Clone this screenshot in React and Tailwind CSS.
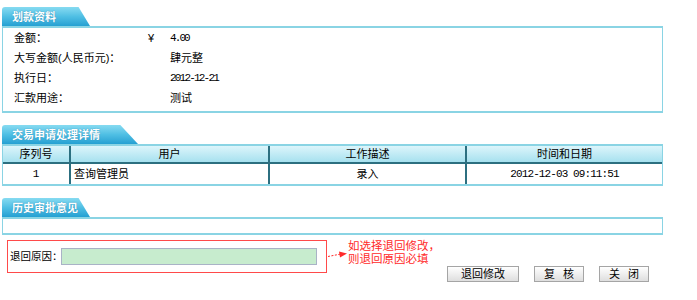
import React from "react";

const FONT = "font-['Liberation_Sans','Noto_Sans_CJK_SC',sans-serif]";
const MONO = "font-['Liberation_Mono',monospace]";

function Tab({ label, w }) {
  return (
    <div className={`h-[19px] ${w} rounded-tl-[3px] bg-linear-to-b from-[#86dbf1] via-[#4fbfe4] to-[#24a0d2] [clip-path:polygon(0_0,87%_0,100%_100%,0_100%)] pl-[10px] text-[11px] leading-[20px] font-bold text-white [text-shadow:0_0_1px_#1b7fa8]`}>
      {label}
    </div>
  );
}

function Row({ label, children }) {
  return (
    <div className="flex h-5 items-center">
      <div className="w-[156px] shrink-0">{label}</div>
      <div className="flex items-center">{children}</div>
    </div>
  );
}

const btn =
  "flex h-[16px] items-center justify-center border border-[#a5a5a5] bg-linear-to-b from-white to-[#dedede] text-[11px] leading-[14px] text-black";

export default function App() {
  return (
    <div className={`w-[697px] h-[300px] bg-white ${FONT} text-[11px] text-black pt-[7px] overflow-hidden`}>
      {/* Section 1 */}
      <div className="ml-[2px] w-[661px]">
        <Tab label="划款资料" w="w-[88px]" />
        <div className="border-x border-y-2 border-[#8ad4e4] pl-[11px] pb-[3px]">
          <div className="flex h-5 items-center">
            <div className="w-[134px] shrink-0">金额：</div>
            <div className="w-[22px] shrink-0 font-['Liberation_Sans',sans-serif]">¥</div>
            <div className={`${MONO} text-[11px] tracking-[-1.9px]`}>4.00</div>
          </div>
          <Row label="大写金额(人民币元)：">肆元整</Row>
          <Row label="执行日：">
            <span className={`${MONO} text-[11px] tracking-[-1.8px]`}>2012-12-21</span>
          </Row>
          <Row label="汇款用途：">测试</Row>
        </div>
      </div>

      {/* Section 2 */}
      <div className="ml-[2px] mt-[12px] w-[661px]">
        <Tab label="交易申请处理详情" w="w-[136px]" />
        <div className="border-x border-y-2 border-[#8ad4e4]">
          <div className="grid h-[18px] grid-cols-[66px_199px_197px_1fr] border-b-2 border-[#2c6f80] bg-linear-to-b from-[#dcf5fb] to-[#a6e1ef] leading-[16px]">
            <div className="text-center">序列号</div>
            <div className="border-l-2 border-[#2c6f80] text-center">用户</div>
            <div className="border-l-2 border-[#2c6f80] text-center">工作描述</div>
            <div className="border-l-2 border-[#2c6f80] text-center">时间和日期</div>
          </div>
          <div className="grid h-[20px] grid-cols-[66px_199px_197px_1fr] items-stretch leading-[20px]">
            <div className={`text-center ${MONO} text-[11px]`}>1</div>
            <div className="border-l-2 border-[#2c6f80] pl-[3px]">查询管理员</div>
            <div className="border-l-2 border-[#2c6f80] text-center">录入</div>
            <div className={`border-l-2 border-[#2c6f80] text-center ${MONO} text-[11px] tracking-[-0.9px]`}>2012-12-03 09:11:51</div>
          </div>
        </div>
      </div>

      {/* Section 3 */}
      <div className="ml-[2px] mt-[12px] w-[661px]">
        <Tab label="历史审批意见" w="w-[88px]" />
        <div className="h-[18px] border-x border-y-2 border-[#8ad4e4]"></div>
      </div>

      {/* Reason + actions */}
      <div className="mt-[5px] flex">
        <div className="ml-[7px] flex h-[33px] w-[320px] items-center border border-[#ff4a4a] pl-[2px]">
          <div className="w-[51px] shrink-0 whitespace-nowrap text-[10.5px]">退回原因：</div>
          <input
            className="h-[17px] w-[256px] border border-[#a9b3c6] bg-[#c7ecce] outline-none"
            readOnly
          />
        </div>
        <div className="flex flex-col">
          <div className="flex h-[26px]">
            <svg width="21" height="12" viewBox="0 0 21 12" className="mt-[9px]">
              <line x1="1" y1="7.5" x2="14" y2="5" stroke="#ff2a2a" strokeWidth="1" strokeDasharray="2 1.5" />
              <polygon points="12,2.5 20,4.5 13,8.5" fill="#ff2a2a" />
            </svg>
            <div className="whitespace-nowrap text-[11.5px] leading-[13px] text-[#ff2a2a]">
              <div>如选择退回修改，</div>
              <div>则退回原因必填</div>
            </div>
          </div>
          <div className="ml-[120px] flex gap-[15px]">
            <button className={`${btn} w-[72px]`}>退回修改</button>
            <button className={`${btn} w-[50px] gap-[8px]`}><span>复</span><span>核</span></button>
            <button className={`${btn} w-[50px] gap-[8px]`}><span>关</span><span>闭</span></button>
          </div>
        </div>
      </div>
    </div>
  );
}
